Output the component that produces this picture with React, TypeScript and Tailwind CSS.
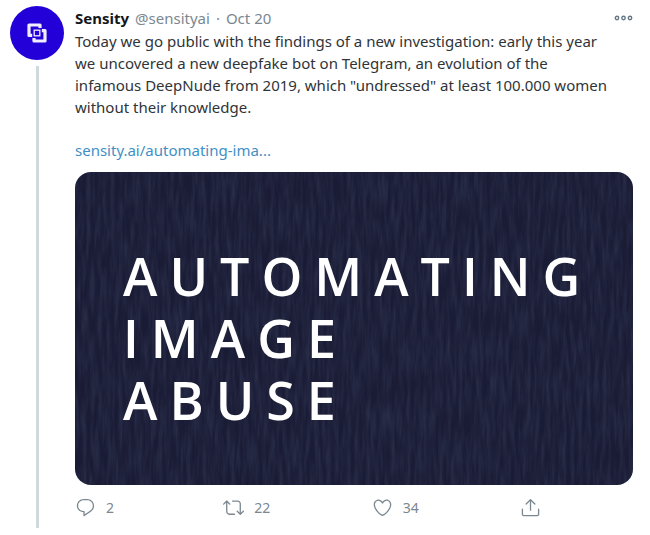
import React from "react";

const icons = {
    reply: "M14.046 2.242l-4.148-.01h-.002c-4.374 0-7.8 3.427-7.8 7.802 0 4.098 3.186 7.206 7.465 7.37v3.828c0 .108.044.286.12.403.142.225.384.347.632.347.138 0 .277-.038.402-.118.264-.168 6.473-4.14 8.088-5.506 1.902-1.61 3.04-3.97 3.043-6.312v-.017c-.006-4.367-3.43-7.787-7.8-7.788zm3.787 12.972c-1.134.96-4.862 3.405-6.772 4.643V16.67c0-.414-.335-.75-.75-.75h-.396c-3.66 0-6.318-2.476-6.318-5.886 0-3.534 2.768-6.302 6.3-6.302l4.147.01h.002c3.532 0 6.3 2.766 6.302 6.296-.003 1.91-.942 3.844-2.514 5.176z",
    retweet: "M23.77 15.67c-.292-.293-.767-.293-1.06 0l-2.22 2.22V7.65c0-2.068-1.683-3.75-3.75-3.75h-5.85c-.414 0-.75.336-.75.75s.336.75.75.75h5.85c1.24 0 2.25 1.01 2.25 2.25v10.24l-2.22-2.22c-.293-.293-.768-.293-1.06 0s-.294.768 0 1.06l3.5 3.5c.145.147.337.22.53.22s.383-.072.53-.22l3.5-3.5c.294-.292.294-.767 0-1.06zm-10.66 3.28H7.26c-1.24 0-2.25-1.01-2.25-2.25V6.46l2.22 2.22c.148.147.34.22.532.22s.384-.073.53-.22c.293-.293.293-.768 0-1.06l-3.5-3.5c-.293-.294-.768-.294-1.06 0l-3.5 3.5c-.294.292-.294.767 0 1.06s.767.293 1.06 0l2.22-2.22V16.7c0 2.068 1.683 3.75 3.75 3.75h5.85c.414 0 .75-.336.75-.75s-.337-.75-.75-.75z",
    like: "M12 21.638h-.014C9.403 21.59 1.95 14.856 1.95 8.478c0-3.064 2.525-5.754 5.403-5.754 2.29 0 3.83 1.58 4.646 2.73.814-1.148 2.354-2.73 4.645-2.73 2.88 0 5.404 2.69 5.404 5.755 0 6.376-7.454 13.11-10.037 13.157H12zM7.354 4.225c-2.08 0-3.903 1.988-3.903 4.255 0 5.74 7.034 11.596 8.55 11.658 1.518-.062 8.55-5.917 8.55-11.658 0-2.267-1.823-4.255-3.903-4.255-2.528 0-3.94 2.936-3.952 2.965-.23.562-1.156.562-1.387 0-.014-.03-1.425-2.965-3.954-2.965z",
    share: "M17.53 7.47l-5-5c-.293-.293-.768-.293-1.06 0l-5 5c-.294.293-.294.768 0 1.06s.767.294 1.06 0l3.72-3.72V15c0 .414.336.75.75.75s.75-.336.75-.75V4.81l3.72 3.72c.146.147.338.22.53.22s.384-.072.53-.22c.293-.293.293-.767 0-1.06zM19.708 21.944H4.292C3.028 21.944 2 20.916 2 19.652V14c0-.414.336-.75.75-.75s.75.336.75.75v5.652c0 .437.355.792.792.792h15.416c.437 0 .792-.355.792-.792V14c0-.414.336-.75.75-.75s.75.336.75.75v5.652c0 1.264-1.028 2.292-2.292 2.292z",
};

function Icon({ path }: { path: string }) {
    return (
        <svg viewBox="0 0 24 24" className="size-[21px] shrink-0" fill="currentColor" aria-hidden="true">
            <path d={path} />
        </svg>
    );
}

function Action({ label, path, count }: { label: string; path: string; count: number }) {
    return (
        <div className="flex-1">
            <button aria-label={label} className="flex items-center gap-2.5 text-sm leading-5">
                <Icon path={path} />
                <span>{count}</span>
            </button>
        </div>
    );
}

function Avatar() {
    return (
        <div className="flex size-[54px] shrink-0 items-center justify-center rounded-full bg-[#2400d8]">
            <svg viewBox="0 0 20 20" className="size-5" fill="none" stroke="#f1edff" strokeWidth="3.2" aria-hidden="true">
                <path d="M5.2 12.4H2V2h11v3" strokeLinejoin="round" />
                <path d="M14.8 7.6H18V18H7v-3" strokeLinejoin="round" />
                <rect x="7.2" y="7.2" width="5.6" height="5.6" strokeWidth="1.3" />
            </svg>
        </div>
    );
}

function CardImage() {
    return (
        <a href="https://sensity.ai" className="relative flex aspect-[558/313] items-center overflow-hidden rounded-2xl bg-[#1a1b35] px-12">
            {/* brushed vertical grain */}
            <svg className="absolute inset-0 size-full opacity-20" aria-hidden="true">
                <filter id="grain" x="0" y="0" width="100%" height="100%">
                    <feTurbulence type="fractalNoise" baseFrequency="0.25 0.03" numOctaves="3" seed="4" />
                    <feColorMatrix values="0 0 0 0 0.18  0 0 0 0 0.26  0 0 0 0 0.38  1.4 0 0 0 -0.4" />
                </filter>
                <rect width="100%" height="100%" filter="url(#grain)" />
            </svg>
            <h2 className="relative pt-[18px] font-['Open_Sans','Noto_Sans',sans-serif] text-[52px] font-semibold leading-[62px] tracking-[12px] text-white">
                AUTOMATING
                <br />
                IMAGE
                <br />
                ABUSE
            </h2>
        </a>
    );
}

export default function App() {
    return (
        <main className="bg-white font-['Noto_Sans','Open_Sans',sans-serif]">
            <article className="flex gap-[11px] pt-1.5 pr-[17px] pb-[7px] pl-2.5">
                <div className="flex flex-col items-center gap-1.5">
                    <Avatar />
                    <div className="w-[3px] flex-1 bg-[#d0d9dc]" />
                </div>

                <div className="min-w-0 flex-1">
                    <header className="flex items-center justify-between text-[15px] leading-6">
                        <div className="flex gap-1.5 text-[#7b8790]">
                            <span className="font-bold text-[#14171a]">Sensity</span>
                            <span>@sensityai</span>
                            <span>·</span>
                            <time>Oct 20</time>
                        </div>
                        <button aria-label="More" className="text-[#657786]">
                            <svg viewBox="0 0 20 6" className="h-1.5 w-5" fill="none" stroke="currentColor" strokeWidth="1.4">
                                <circle cx="4" cy="3" r="1.7" />
                                <circle cx="10.5" cy="3" r="1.7" />
                                <circle cx="17" cy="3" r="1.7" />
                            </svg>
                        </button>
                    </header>

                    <p className="text-[15px] leading-[22px] text-[#303438]">
                        Today we go public with the findings of a new investigation: early this year
                        <br />
                        we uncovered a new deepfake bot on Telegram, an evolution of the
                        <br />
                        infamous DeepNude from 2019, which "undressed" at least 100.000 women
                        <br />
                        without their knowledge.
                    </p>
                    <a href="https://sensity.ai" className="mt-[21px] mb-[11px] block text-[15px] leading-[22px] text-[#3f8fc6]">
                        sensity.ai/automating-ima...
                    </a>

                    <CardImage />

                    <footer className="flex items-center pt-3 pr-[92px] pb-2.5 text-[#7b888f]">
                        <Action label="Reply" path={icons.reply} count={2} />
                        <Action label="Retweet" path={icons.retweet} count={22} />
                        <Action label="Like" path={icons.like} count={34} />
                        <button aria-label="Share">
                            <Icon path={icons.share} />
                        </button>
                    </footer>
                </div>
            </article>
        </main>
    );
}
